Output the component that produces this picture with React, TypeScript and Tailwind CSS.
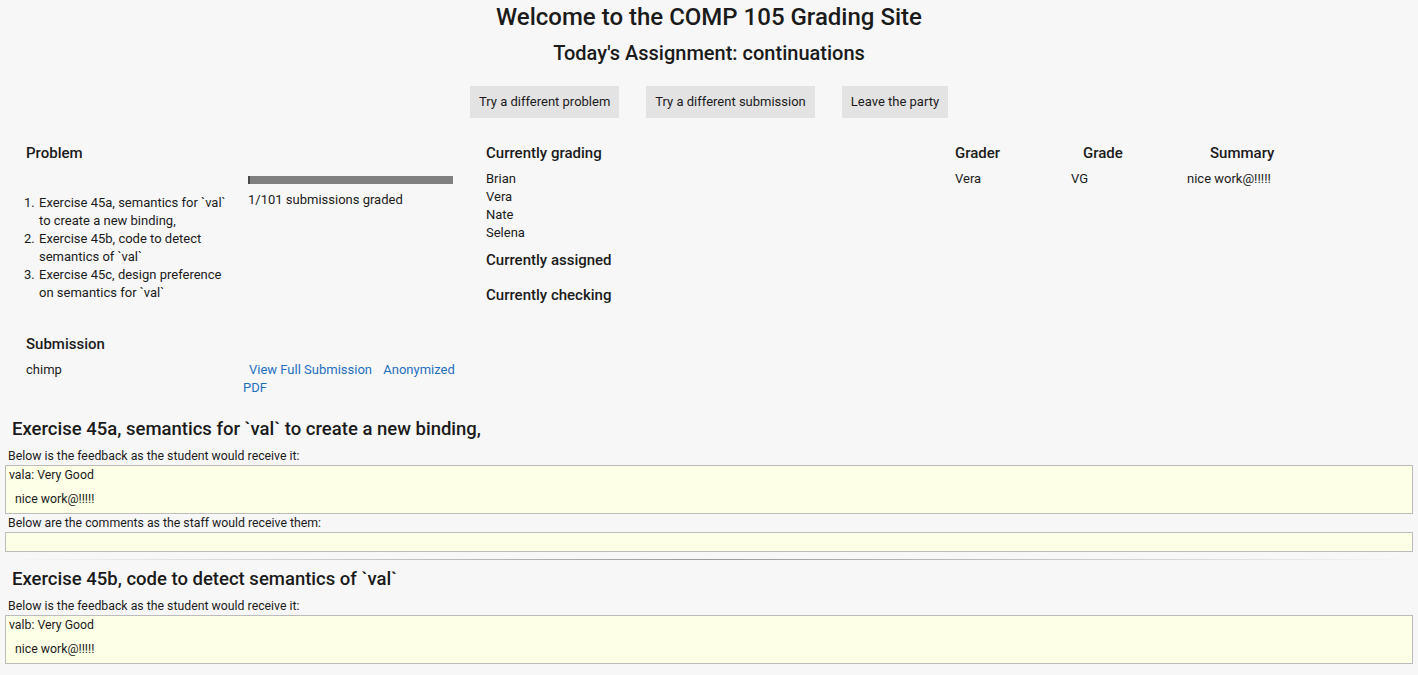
import React from "react";

const graders = ["Brian", "Vera", "Nate", "Selena"];

const problems = [
  "Exercise 45a, semantics for `val` to create a new binding,",
  "Exercise 45b, code to detect semantics of `val`",
  "Exercise 45c, design preference on semantics for `val`",
];

const Heading = ({ children, className = "" }: { children: React.ReactNode; className?: string }) => (
  <h3 className={`text-[15px] leading-[20px] font-medium text-[#1b1b1b] ${className}`}>{children}</h3>
);

const FeedbackBox = ({ children, className = "" }: { children?: React.ReactNode; className?: string }) => (
  <div className={`border border-[#bcbcbc] bg-[#fdffe6] ${className}`}>{children}</div>
);

const Exercise = ({ title, code, comments }: { title: string; code: string; comments: boolean }) => (
  <section>
    <h2 className="pl-[7px] text-[18.5px] leading-[24px] font-medium text-[#1b1b1b]">{title}</h2>
    <p className="mt-[8px] pl-[3px] text-[12.3px] leading-[15px]">Below is the feedback as the student would receive it:</p>
    <FeedbackBox className="mt-[1px] h-[49px] text-[12.3px] leading-[15px]">
      <div className="pl-[3px] pt-[2px]">{code}: Very Good</div>
      <div className="pl-[9px] pt-[9px]">nice work@!!!!!</div>
    </FeedbackBox>
    {comments && (
      <>
        <p className="mt-[2px] pl-[3px] text-[12.3px] leading-[15px]">Below are the comments as the staff would receive them:</p>
        <FeedbackBox className="mt-[1px] h-[20px]" />
      </>
    )}
  </section>
);

export default function App() {
  return (
    <div className="min-h-screen bg-[#f7f7f7] font-['Roboto','Liberation_Sans',sans-serif] text-[#1b1b1b]">
      <header className="flex flex-col items-center pt-[2px]">
        <h1 className="text-[24px] leading-[30px] font-medium">Welcome to the COMP 105 Grading Site</h1>
        <h2 className="mt-[8px] text-[20px] leading-[26px] font-medium">Today's Assignment: continuations</h2>
        <div className="mt-[20px] flex gap-[27px] text-[13px]">
          <button className="h-[32px] bg-[#e3e3e3] px-[9px]">Try a different problem</button>
          <button className="h-[32px] bg-[#e3e3e3] px-[9px]">Try a different submission</button>
          <button className="h-[32px] bg-[#e3e3e3] px-[9px]">Leave the party</button>
        </div>
      </header>

      <main className="mt-[25px] flex pl-[26px] text-[13px] leading-[18px]">
        <div className="w-[460px] shrink-0">
          <div className="grid grid-cols-[217px_216px]">
            <div>
              <Heading>Problem</Heading>
              <ol className="mt-[31px] w-[205px] list-decimal pl-[12px]">
                {problems.map((p) => (
                  <li key={p} className="pl-[1px]">{p}</li>
                ))}
              </ol>
            </div>
            <div className="pt-[33px] pl-[5px]">
              <div className="h-[8px] w-[205px] bg-[#808080]">
                <div className="h-full w-[2px] bg-[#4a4a4a]" />
              </div>
              <p className="mt-[7px]">1/101 submissions graded</p>
            </div>
          </div>
          <Heading className="mt-[32px]">Submission</Heading>
          <div className="mt-[7px] grid grid-cols-[217px_216px]">
            <div>chimp</div>
            <div className="text-[#1f6fbf]">
              <span className="ml-[6px]">View Full Submission</span>{" "}
              <span className="ml-[8px]">Anonymized</span> PDF
            </div>
          </div>
        </div>

        <div className="w-[469px] shrink-0">
          <Heading>Currently grading</Heading>
          <ul className="mt-[7px]">
            {graders.map((g) => (
              <li key={g}>{g}</li>
            ))}
          </ul>
          <Heading className="mt-[8px]">Currently assigned</Heading>
          <Heading className="mt-[15px]">Currently checking</Heading>
        </div>

        <div className="grid h-fit grid-cols-[116px_116px_160px] gap-y-[7px]">
          <Heading>Grader</Heading>
          <Heading className="pl-[12px]">Grade</Heading>
          <Heading className="pl-[23px]">Summary</Heading>
          <div>Vera</div>
          <div>VG</div>
          <div>nice work@!!!!!</div>
        </div>
      </main>

      <div className="mt-[20px] px-[5px] pb-[10px]">
        <Exercise title="Exercise 45a, semantics for `val` to create a new binding," code="vala" comments />
        <hr className="mt-[7px] h-[1px] border-0 bg-gradient-to-r from-[#f7f7f7] via-[#9a9a9a] to-[#f7f7f7]" />
        <div className="mt-[7px]">
          <Exercise title="Exercise 45b, code to detect semantics of `val`" code="valb" comments={false} />
        </div>
      </div>
    </div>
  );
}
